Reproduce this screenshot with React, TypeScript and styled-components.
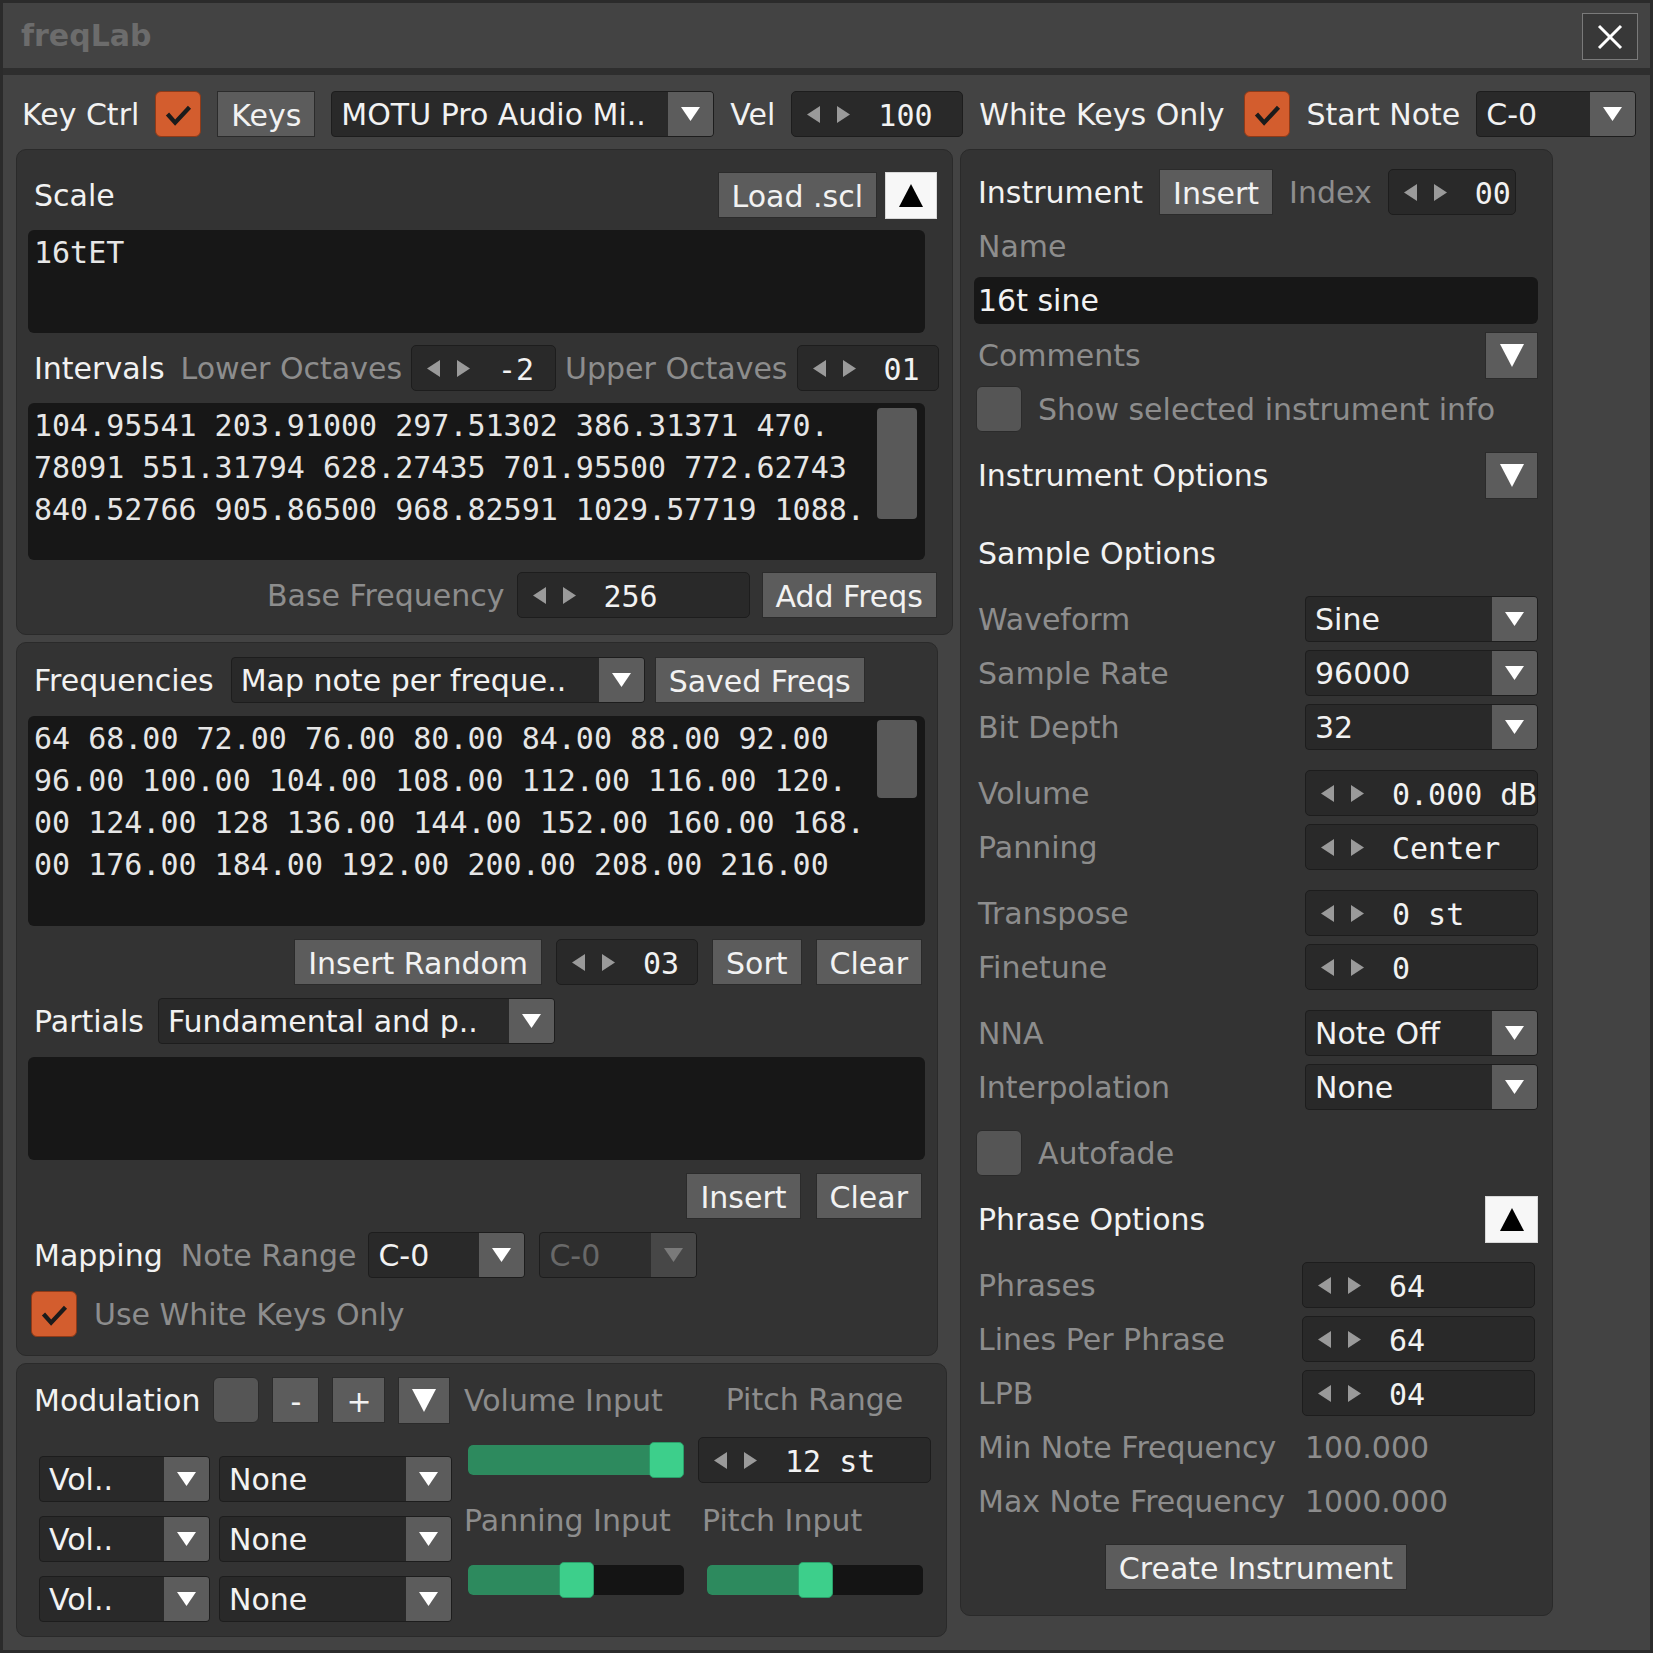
import React from "react";
import styled, { createGlobalStyle } from "styled-components";

const C = {
  body: "#434343",
  panel: "#333333",
  panelEdge: "#2a2a2a",
  field: "#171717",
  btn: "#5c5c5c",
  btnEdge: "#2b2b2b",
  dd: "#292929",
  ddEdge: "#1d1d1d",
  text: "#f2f2f2",
  mono: "#e6e6e6",
  muted: "#8d8d8d",
  orange: "#d35d2e",
};

const SANS = `"DejaVu Sans", "Liberation Sans", sans-serif`;
const MONO = `"DejaVu Sans Mono", "Liberation Mono", monospace`;

const GlobalStyle = createGlobalStyle`
  html, body { margin: 0; padding: 0; background: #2b2b2b; }
  body { font-family: ${SANS}; }
  * { box-sizing: border-box; }
`;

const Window = styled.div`
  width: 1653px;
  height: 1653px;
  background: ${C.body};
  border: 3px solid #2b2b2b;
  display: flex;
  flex-direction: column;
  overflow: hidden;
`;

const TitleBar = styled.header`
  height: 72px;
  flex-shrink: 0;
  display: flex;
  align-items: center;
  justify-content: space-between;
  padding: 0 12px 0 18px;
  border-bottom: 7px solid #2e2e2e;
`;

const Title = styled.span`
  font: bold 30px ${SANS};
  color: #6c6c6c;
`;

const CloseButton = styled.button`
  width: 56px;
  height: 47px;
  margin-top: 2px;
  background: #383838;
  border: 1px solid #7a7a7a;
  display: flex;
  align-items: center;
  justify-content: center;
  padding: 0;
`;

const Main = styled.main`
  padding: 16px 0 0 13px;
  display: flex;
  flex-direction: column;
`;

const Toolbar = styled.div`
  height: 46px;
  display: flex;
  align-items: center;
  gap: 16px;
  padding-left: 6px;
`;

const Columns = styled.div`
  margin-top: 12px;
  display: flex;
  align-items: flex-start;
  gap: 7px;
`;

const LeftCol = styled.div`
  display: flex;
  flex-direction: column;
  gap: 7px;
`;

const Label = styled.span<{ $muted?: boolean; $indent?: number; $ml?: number; $mr?: number }>`
  font-size: 30px;
  height: 46px;
  padding-top: 2px;
  line-height: 44px;
  white-space: nowrap;
  flex-shrink: 0;
  color: ${(p) => (p.$muted ? C.muted : C.text)};
  padding-left: ${(p) => p.$indent ?? 0}px;
  margin-left: ${(p) => p.$ml ?? 0}px;
  margin-right: ${(p) => p.$mr ?? 0}px;
`;

const Button = styled.button<{ $w?: number }>`
  height: 46px;
  ${(p) => (p.$w ? `width: ${p.$w}px; padding: 2px 0 0;` : "padding: 2px 13px 0;")}
  flex-shrink: 0;
  background: ${C.btn};
  border: 1px solid ${C.btnEdge};
  border-radius: 0;
  color: ${C.text};
  font: 30px ${SANS};
  display: inline-flex;
  align-items: center;
  justify-content: center;
  white-space: nowrap;
`;

const IconButton = styled.button<{ $w: number; $light?: boolean }>`
  width: ${(p) => p.$w}px;
  height: 47px;
  flex-shrink: 0;
  padding: 0;
  background: ${(p) => (p.$light ? "#f7f7f7" : C.btn)};
  border: 1px solid ${(p) => (p.$light ? "#d8d8d8" : C.btnEdge)};
  display: inline-flex;
  align-items: center;
  justify-content: center;
`;

const CheckBox = styled.span<{ $checked?: boolean }>`
  width: 46px;
  height: 46px;
  flex-shrink: 0;
  border-radius: 6px;
  background: ${(p) => (p.$checked ? C.orange : "#555555")};
  border: 1px solid ${(p) => (p.$checked ? "#8f3a18" : "#2b2b2b")};
  display: inline-flex;
  align-items: center;
  justify-content: center;
`;

const CheckSlot = styled.span<{ $ml?: number }>`
  display: inline-flex;
  margin-left: ${(p) => p.$ml ?? 0}px;
`;

const DropBox = styled.div<{ $w: number; $disabled?: boolean }>`
  width: ${(p) => p.$w}px;
  height: 46px;
  flex-shrink: 0;
  display: flex;
  background: ${(p) => (p.$disabled ? "#2e2e2e" : C.dd)};
  border: 1px solid ${C.ddEdge};
  border-radius: 4px;
  overflow: hidden;
`;

const DropText = styled.span<{ $disabled?: boolean }>`
  flex: 1;
  padding: 2px 0 0 9px;
  font-size: 30px;
  line-height: 42px;
  white-space: nowrap;
  overflow: hidden;
  color: ${(p) => (p.$disabled ? "#686868" : C.text)};
`;

const DropArrow = styled.span<{ $disabled?: boolean }>`
  width: 45px;
  flex-shrink: 0;
  background: ${(p) => (p.$disabled ? "#474747" : C.btn)};
  display: flex;
  align-items: center;
  justify-content: center;
`;

const StepBox = styled.div<{ $w: number }>`
  width: ${(p) => p.$w}px;
  height: 46px;
  flex-shrink: 0;
  display: flex;
  align-items: center;
  padding-left: 15px;
  background: ${C.dd};
  border: 1px solid ${C.ddEdge};
  border-radius: 5px;
`;

const StepArrows = styled.span`
  display: flex;
  gap: 17px;
  align-items: center;
`;

const StepValue = styled.span`
  margin-left: 28px;
  padding-top: 2px;
  font: 30px ${MONO};
  color: ${C.text};
  white-space: pre;
`;

const Panel = styled.section<{ $w: number; $gap: number; $pad: string }>`
  width: ${(p) => p.$w}px;
  background: ${C.panel};
  border: 1px solid ${C.panelEdge};
  border-radius: 10px;
  padding: ${(p) => p.$pad};
  display: flex;
  flex-direction: column;
  gap: ${(p) => p.$gap}px;
`;

const Row = styled.div<{ $gap?: number; $justify?: string }>`
  height: 46px;
  display: flex;
  align-items: center;
  gap: ${(p) => p.$gap ?? 0}px;
  justify-content: ${(p) => p.$justify ?? "flex-start"};
`;

const Group = styled.div`
  display: flex;
  align-items: center;
  gap: 8px;
`;

const TextArea = styled.div<{ $h: number }>`
  position: relative;
  width: 897px;
  height: ${(p) => p.$h}px;
  flex-shrink: 0;
  background: ${C.field};
  border-radius: 6px;
  padding: 2px 6px;
  font: 30px/42px ${MONO};
  color: ${C.mono};
  overflow: hidden;
`;

const MonoLine = styled.div`
  white-space: pre;
`;

const ScrollThumb = styled.div<{ $top: number; $h: number }>`
  position: absolute;
  right: 8px;
  top: ${(p) => p.$top}px;
  width: 40px;
  height: ${(p) => p.$h}px;
  background: #595959;
  border-radius: 4px;
`;

const NameField = styled.div`
  height: 47px;
  background: ${C.field};
  border-radius: 6px;
  padding: 1px 0 0 4px;
  font-size: 30px;
  line-height: 46px;
  color: ${C.text};
`;

const RightPanel = styled.section`
  width: 593px;
  background: ${C.panel};
  border: 1px solid ${C.panelEdge};
  border-radius: 10px;
  padding: 19px 14px 25px 13px;
  display: flex;
  flex-direction: column;
  gap: 20px;
`;

const Stack = styled.div<{ $gap: number; $mt?: number; $ml?: number }>`
  display: flex;
  flex-direction: column;
  gap: ${(p) => p.$gap}px;
  margin-top: ${(p) => p.$mt ?? 0}px;
  margin-left: ${(p) => p.$ml ?? 0}px;
`;

const FormRow = styled.div<{ $labelW: number }>`
  height: 46px;
  display: grid;
  grid-template-columns: ${(p) => p.$labelW}px 233px;
  align-items: center;
`;

const ModBody = styled.div`
  display: flex;
  gap: 12px;
`;

const ModLeft = styled.div`
  display: flex;
  flex-direction: column;
`;

const ModGrid = styled.div`
  display: grid;
  grid-template-columns: 223px 233px;
  grid-auto-rows: 46px;
  column-gap: 11px;
  row-gap: 14px;
  align-items: center;
`;

const CenterCell = styled.div`
  justify-self: center;
`;

const SliderTrack = styled.div`
  position: relative;
  width: 216px;
  height: 30px;
  background: #141414;
  border-radius: 5px;
  justify-self: center;
`;

const SliderFill = styled.div`
  height: 100%;
  background: #2d8a5e;
  border-radius: 5px 0 0 5px;
`;

const SliderHandle = styled.div`
  position: absolute;
  top: -3px;
  width: 35px;
  height: 36px;
  background: #3dcf8b;
  border: 1px solid #2a9f69;
  border-radius: 5px;
`;

/* ---------- icons ---------- */

const CheckIcon = () => (
  <svg width="46" height="46" viewBox="0 0 46 46">
    <polyline points="12,23 20,32 35,16" fill="none" stroke="#1b1b1b" strokeWidth="4.5" />
  </svg>
);

const SmallDown = ({ color = "#ffffff" }: { color?: string }) => (
  <svg width="19" height="14" viewBox="0 0 19 14">
    <polygon points="0,0 19,0 9.5,14" fill={color} />
  </svg>
);

const BigDown = () => (
  <svg width="24" height="23" viewBox="0 0 24 23">
    <polygon points="0,0 24,0 12,23" fill="#ffffff" />
  </svg>
);

const BigUp = () => (
  <svg width="24" height="23" viewBox="0 0 24 23">
    <polygon points="12,0 24,23 0,23" fill="#000000" />
  </svg>
);

const StepLeft = () => (
  <svg width="13" height="17" viewBox="0 0 13 17">
    <polygon points="13,0 13,17 0,8.5" fill="#9a9a9a" />
  </svg>
);

const StepRight = () => (
  <svg width="13" height="17" viewBox="0 0 13 17">
    <polygon points="0,0 13,8.5 0,17" fill="#9a9a9a" />
  </svg>
);

const CloseIcon = () => (
  <svg width="26" height="26" viewBox="0 0 26 26">
    <line x1="2" y1="2" x2="24" y2="24" stroke="#ffffff" strokeWidth="3" />
    <line x1="24" y1="2" x2="2" y2="24" stroke="#ffffff" strokeWidth="3" />
  </svg>
);

/* ---------- widgets ---------- */

const Check = ({ checked }: { checked?: boolean }) => (
  <CheckBox $checked={checked}>{checked && <CheckIcon />}</CheckBox>
);

const Dropdown = ({ w, value, disabled }: { w: number; value: string; disabled?: boolean }) => (
  <DropBox $w={w} $disabled={disabled}>
    <DropText $disabled={disabled}>{value}</DropText>
    <DropArrow $disabled={disabled}>
      <SmallDown color={disabled ? "#7a7a7a" : "#ffffff"} />
    </DropArrow>
  </DropBox>
);

const Stepper = ({ w, value }: { w: number; value: string }) => (
  <StepBox $w={w}>
    <StepArrows>
      <StepLeft />
      <StepRight />
    </StepArrows>
    <StepValue>{value}</StepValue>
  </StepBox>
);

const Slider = ({ pct }: { pct: number }) => {
  const left = Math.round(pct * (216 - 35));
  return (
    <SliderTrack>
      <SliderFill style={{ width: left + 18 }} />
      <SliderHandle style={{ left }} />
    </SliderTrack>
  );
};

const intervalLines = [
  "104.95541 203.91000 297.51302 386.31371 470.",
  "78091 551.31794 628.27435 701.95500 772.62743",
  "840.52766 905.86500 968.82591 1029.57719 1088.",
];

const freqLines = [
  "64 68.00 72.00 76.00 80.00 84.00 88.00 92.00",
  "96.00 100.00 104.00 108.00 112.00 116.00 120.",
  "00 124.00 128 136.00 144.00 152.00 160.00 168.",
  "00 176.00 184.00 192.00 200.00 208.00 216.00",
];

const sampleGroups: { label: string; kind: "dd" | "st"; value: string }[][] = [
  [
    { label: "Waveform", kind: "dd", value: "Sine" },
    { label: "Sample Rate", kind: "dd", value: "96000" },
    { label: "Bit Depth", kind: "dd", value: "32" },
  ],
  [
    { label: "Volume", kind: "st", value: "0.000 dB" },
    { label: "Panning", kind: "st", value: "Center" },
  ],
  [
    { label: "Transpose", kind: "st", value: "0 st" },
    { label: "Finetune", kind: "st", value: "0" },
  ],
  [
    { label: "NNA", kind: "dd", value: "Note Off" },
    { label: "Interpolation", kind: "dd", value: "None" },
  ],
];

export default function App() {
  return (
    <>
      <GlobalStyle />
      <Window>
        <TitleBar>
          <Title>freqLab</Title>
          <CloseButton aria-label="close">
            <CloseIcon />
          </CloseButton>
        </TitleBar>

        <Main>
          <Toolbar>
            <Label>Key Ctrl</Label>
            <Check checked />
            <Button>Keys</Button>
            <Dropdown w={383} value="MOTU Pro Audio Mi.." />
            <Label>Vel</Label>
            <Stepper w={172} value="100" />
            <Label $mr={4}>White Keys Only</Label>
            <Check checked />
            <Label>Start Note</Label>
            <Dropdown w={160} value="C-0" />
          </Toolbar>

          <Columns>
            <LeftCol>
              {/* Scale */}
              <Panel $w={937} $gap={12} $pad="22px 15px 16px 11px">
                <Row $justify="space-between">
                  <Label $indent={6}>Scale</Label>
                  <Group>
                    <Button>Load .scl</Button>
                    <IconButton $w={52} $light>
                      <BigUp />
                    </IconButton>
                  </Group>
                </Row>
                <TextArea $h={103}>
                  <MonoLine>16tET</MonoLine>
                </TextArea>
                <Row $gap={9}>
                  <Label $indent={6} $mr={7}>Intervals</Label>
                  <Label $muted>Lower Octaves</Label>
                  <Stepper w={145} value="-2" />
                  <Label $muted>Upper Octaves</Label>
                  <Stepper w={142} value="01" />
                </Row>
                <TextArea $h={157}>
                  {intervalLines.map((l) => (
                    <MonoLine key={l}>{l}</MonoLine>
                  ))}
                  <ScrollThumb $top={5} $h={111} />
                </TextArea>
                <Row $gap={12} $justify="flex-end">
                  <Label $muted>Base Frequency</Label>
                  <Stepper w={233} value="256" />
                  <Button>Add Freqs</Button>
                </Row>
              </Panel>

              {/* Frequencies */}
              <Panel $w={922} $gap={13} $pad="14px 15px 18px 11px">
                <Row $gap={10}>
                  <Label $indent={6} $mr={7}>Frequencies</Label>
                  <Dropdown w={414} value="Map note per freque.." />
                  <Button>Saved Freqs</Button>
                </Row>
                <TextArea $h={210}>
                  {freqLines.map((l) => (
                    <MonoLine key={l}>{l}</MonoLine>
                  ))}
                  <ScrollThumb $top={4} $h={78} />
                </TextArea>
                <Row $gap={14} $justify="flex-end">
                  <Button>Insert Random</Button>
                  <Stepper w={142} value="03" />
                  <Button>Sort</Button>
                  <Button>Clear</Button>
                </Row>
                <Row $gap={14}>
                  <Label $indent={6}>Partials</Label>
                  <Dropdown w={397} value="Fundamental and p.." />
                </Row>
                <TextArea $h={103} />
                <Row $gap={15} $justify="flex-end">
                  <Button>Insert</Button>
                  <Button>Clear</Button>
                </Row>
                <Row $gap={14}>
                  <Label $indent={6} $mr={4}>Mapping</Label>
                  <Label $muted $mr={-2}>Note Range</Label>
                  <Dropdown w={157} value="C-0" />
                  <Dropdown w={158} value="C-0" disabled />
                </Row>
                <Row $gap={17}>
                  <CheckSlot $ml={3}>
                    <Check checked />
                  </CheckSlot>
                  <Label $muted>Use White Keys Only</Label>
                </Row>
              </Panel>

              {/* Modulation */}
              <Panel $w={931} $gap={0} $pad="13px 14px 14px 17px">
                <ModBody>
                  <ModLeft>
                    <Row $gap={13}>
                      <Label>Modulation</Label>
                      <Check />
                      <Button $w={47}>-</Button>
                      <Button $w={53}>+</Button>
                      <IconButton $w={52}>
                        <BigDown />
                      </IconButton>
                    </Row>
                    <Stack $gap={14} $mt={33} $ml={5}>
                      {[0, 1, 2].map((i) => (
                        <Row key={i} $gap={9}>
                          <Dropdown w={171} value="Vol.." />
                          <Dropdown w={233} value="None" />
                        </Row>
                      ))}
                    </Stack>
                  </ModLeft>
                  <ModGrid>
                    <Label $muted>Volume Input</Label>
                    <CenterCell>
                      <Label $muted>Pitch Range</Label>
                    </CenterCell>
                    <Slider pct={1} />
                    <Stepper w={233} value="12 st" />
                    <Label $muted>Panning Input</Label>
                    <Label $muted $indent={4}>Pitch Input</Label>
                    <Slider pct={0.5} />
                    <Slider pct={0.5} />
                  </ModGrid>
                </ModBody>
              </Panel>
            </LeftCol>

            {/* Instrument */}
            <RightPanel>
              <Stack $gap={8}>
                <Row $gap={16}>
                  <Label $indent={4}>Instrument</Label>
                  <Button>Insert</Button>
                  <Label $muted>Index</Label>
                  <Stepper w={128} value="00" />
                </Row>
                <Row>
                  <Label $muted $indent={4}>Name</Label>
                </Row>
                <NameField>16t sine</NameField>
                <Row $justify="space-between">
                  <Label $muted $indent={4}>Comments</Label>
                  <IconButton $w={53}>
                    <BigDown />
                  </IconButton>
                </Row>
                <Row $gap={16}>
                  <CheckSlot $ml={2}>
                    <Check />
                  </CheckSlot>
                  <Label $muted>Show selected instrument info</Label>
                </Row>
              </Stack>

              <Row $justify="space-between">
                <Label $indent={4}>Instrument Options</Label>
                <IconButton $w={53}>
                  <BigDown />
                </IconButton>
              </Row>

              <Stack $gap={8} $mt={12}>
                <Row>
                  <Label $indent={4}>Sample Options</Label>
                </Row>
              </Stack>

              {sampleGroups.map((g, gi) => (
                <Stack key={gi} $gap={8}>
                  {g.map((r) => (
                    <FormRow key={r.label} $labelW={331}>
                      <Label $muted $indent={4}>{r.label}</Label>
                      {r.kind === "dd" ? (
                        <Dropdown w={233} value={r.value} />
                      ) : (
                        <Stepper w={233} value={r.value} />
                      )}
                    </FormRow>
                  ))}
                </Stack>
              ))}

              <Row $gap={16}>
                <CheckSlot $ml={2}>
                  <Check />
                </CheckSlot>
                <Label $muted>Autofade</Label>
              </Row>

              <Row $justify="space-between">
                <Label $indent={4}>Phrase Options</Label>
                <IconButton $w={53} $light>
                  <BigUp />
                </IconButton>
              </Row>

              <Stack $gap={8}>
                <FormRow $labelW={328}>
                  <Label $muted $indent={4}>Phrases</Label>
                  <Stepper w={233} value="64" />
                </FormRow>
                <FormRow $labelW={328}>
                  <Label $muted $indent={4}>Lines Per Phrase</Label>
                  <Stepper w={233} value="64" />
                </FormRow>
                <FormRow $labelW={328}>
                  <Label $muted $indent={4}>LPB</Label>
                  <Stepper w={233} value="04" />
                </FormRow>
                <FormRow $labelW={331}>
                  <Label $muted $indent={4}>Min Note Frequency</Label>
                  <Label $muted>100.000</Label>
                </FormRow>
                <FormRow $labelW={331}>
                  <Label $muted $indent={4}>Max Note Frequency</Label>
                  <Label $muted>1000.000</Label>
                </FormRow>
              </Stack>

              <Row $justify="center">
                <Button>Create Instrument</Button>
              </Row>
            </RightPanel>
          </Columns>
        </Main>
      </Window>
    </>
  );
}
